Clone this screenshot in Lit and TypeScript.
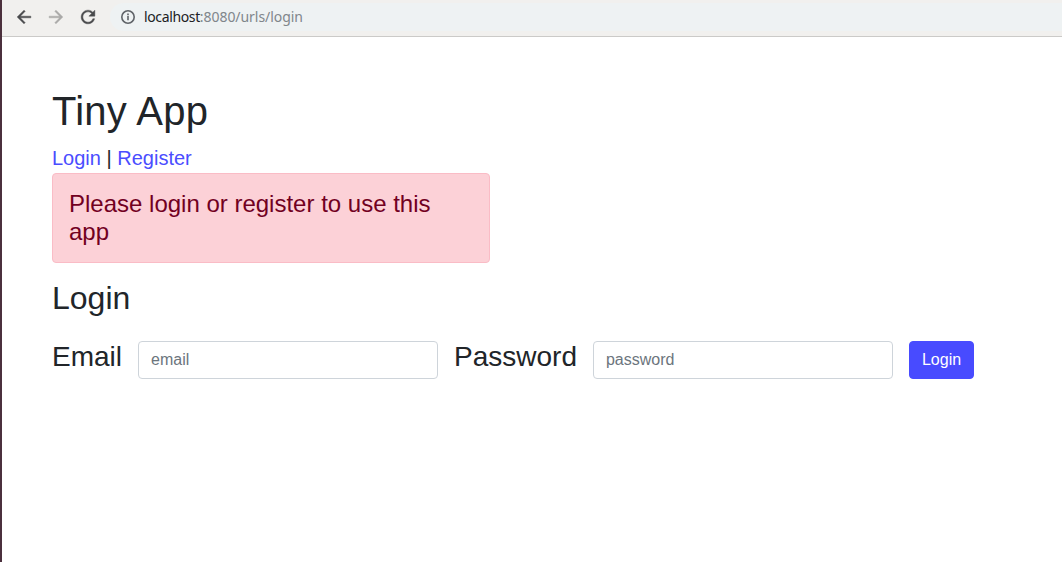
import { LitElement, html, css } from "lit";
import { customElement } from "lit/decorators.js";

@customElement("browser-toolbar")
class BrowserToolbar extends LitElement {
  static styles = css`
    :host {
      display: flex;
      box-sizing: border-box;
      height: 37px;
      padding: 3px 0 5px 10px;
      background: #f1f0ee;
      border-bottom: 1px solid #cbcac8;
    }
    .nav {
      display: flex;
      gap: 8px;
      padding-top: 2px;
    }
    .icon {
      display: block;
      width: 24px;
      height: 24px;
      fill: #494a4c;
      stroke: #494a4c;
      stroke-width: 0.5;
    }
    .disabled {
      fill: #aaa9a8;
      stroke: #aaa9a8;
    }
    .address {
      display: flex;
      flex: 1;
      margin-left: 10px;
      padding-left: 10px;
      border-radius: 14px 0 0 14px;
      background: #eef2f3;
      color: #80868b;
      font: 14px/28px "Noto Sans", sans-serif;
      white-space: pre;
    }
    .info {
      width: 16px;
      height: 16px;
      margin: 6px 8px 0 0;
      fill: none;
      stroke: #5f6368;
      stroke-width: 1.6;
    }
    .host {
      color: #202124;
      letter-spacing: -0.37px;
    }
    .path {
      letter-spacing: -0.05px;
    }
  `;

  render() {
    return html`
      <div class="nav">
        <svg class="icon" viewBox="0 0 28 28"><path transform="translate(2 2)" d="M20 11H7.83l5.59-5.59L12 4l-8 8 8 8 1.41-1.41L7.83 13H20v-2z"/></svg>
        <svg class="icon disabled" viewBox="0 0 28 28"><path transform="translate(2 2)" d="M12 4l-1.41 1.41L16.17 11H4v2h12.17l-5.58 5.59L12 20l8-8z"/></svg>
        <svg class="icon" viewBox="0 0 28 28"><path transform="translate(2 2)" d="M17.65 6.35C16.2 4.9 14.21 4 12 4c-4.42 0-7.99 3.58-7.99 8s3.57 8 7.99 8c3.73 0 6.84-2.55 7.73-6h-2.08c-.82 2.33-3.04 4-5.65 4-3.31 0-6-2.69-6-6s2.69-6 6-6c1.66 0 3.14.69 4.22 1.78L13 11h7V4l-2.35 2.35z"/></svg>
      </div>
      <div class="address">
        <svg class="info" viewBox="0 0 16 16"><circle cx="8" cy="8" r="6.2"/><path d="M8 7v4.2M8 4.6v1.6"/></svg>
        <span class="host">localhost</span><span class="path">:8080/urls/login</span>
      </div>
    `;
  }
}

@customElement("app-root")
class AppRoot extends LitElement {
  static styles = css`
    :host {
      display: block;
      box-sizing: border-box;
      height: 562px;
      overflow: hidden;
      border-left: 2px solid #4b303d;
      background: #fff;
      color: #212529;
      font: 16px/1.5 "Liberation Sans", Arial, sans-serif;
    }
    main {
      padding: 50px;
    }
    h1, h2, label {
      margin: 0;
      font-weight: 400;
      line-height: 1.2;
    }
    h1 {
      margin-bottom: 8px;
      font-size: 40px;
      letter-spacing: 0.25px;
    }
    .links {
      font-size: 20px;
      line-height: 30px;
    }
    a {
      color: #4a4dff;
      text-decoration: none;
    }
    .alert {
      box-sizing: border-box;
      width: 438px;
      height: 90px;
      padding: 16px;
      border: 1px solid #fabcc6;
      border-radius: 4px;
      background: #fcd1d7;
      color: #72001f;
      font-size: 24px;
      line-height: 28px;
    }
    h2 {
      margin: 16px 0 24px;
      font-size: 32px;
      line-height: 38px;
    }
    form {
      display: flex;
      align-items: flex-start;
      gap: 16px;
    }
    label {
      font-size: 28px;
      line-height: 31px;
    }
    input, button {
      box-sizing: border-box;
      height: 38px;
      margin: 0;
      padding: 6px 12px;
      border: 1px solid #ced4da;
      border-radius: 4px;
      background: #fff;
      color: #495057;
      font: inherit;
    }
    input {
      width: 300px;
    }
    input::placeholder {
      color: #6c757d;
      opacity: 1;
    }
    button {
      border-color: #484bff;
      background: #484bff;
      color: #fff;
    }
  `;

  render() {
    return html`
      <browser-toolbar></browser-toolbar>
      <main>
        <h1>Tiny App</h1>
        <div class="links"><a href="#">Login</a> | <a href="#">Register</a></div>
        <div class="alert">Please login or register to use this app</div>
        <h2>Login</h2>
        <form>
          <label for="email">Email</label>
          <input id="email" type="email" placeholder="email" />
          <label for="password">Password</label>
          <input id="password" type="password" placeholder="password" />
          <button type="button">Login</button>
        </form>
      </main>
    `;
  }
}
